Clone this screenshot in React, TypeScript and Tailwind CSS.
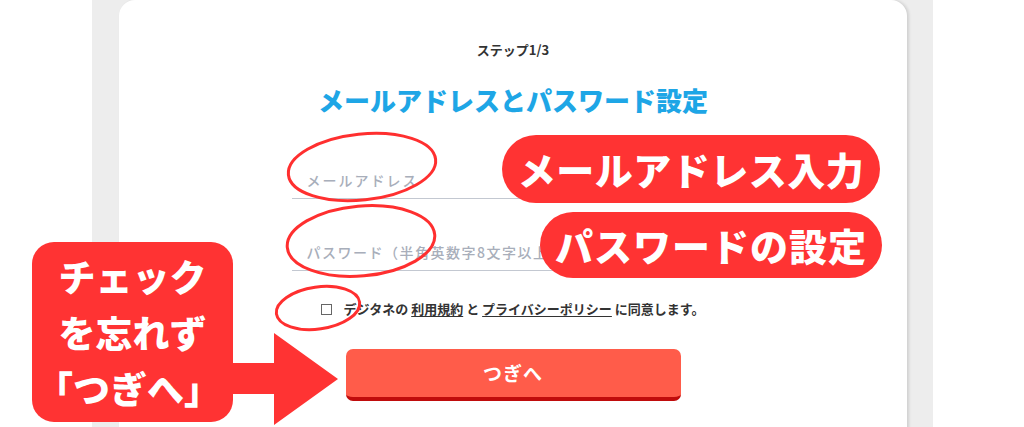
import React from "react";

const font = "font-['Noto_Sans_CJK_JP','Noto_Sans',sans-serif]";

const Overlay = () => (
  <>
    <svg
      className="absolute inset-0 pointer-events-none"
      width={1024}
      height={427}
      viewBox="0 0 1024 427"
    >
      <g fill="none" stroke="#ff2f2f" strokeWidth={3}>
        <ellipse cx={362} cy={167} rx={74} ry={33} transform="rotate(-6 362 167)" />
        <ellipse cx={361} cy={241} rx={74} ry={35} transform="rotate(-5 361 241)" />
        <ellipse cx={318} cy={308} rx={42} ry={21} transform="rotate(-8 318 308)" />
      </g>
      <polygon
        points="225,363 274,363 274,333 338,379 274,425 274,394 225,394"
        fill="#ff3333"
      />
    </svg>

    <div className="absolute left-[502px] top-[135px] w-[378px] h-[68px] rounded-full bg-[#ff3333] flex items-center justify-center">
      <span className="text-white text-[38px] font-black leading-none tracking-[0.5px]">
        メールアドレス入力
      </span>
    </div>
    <div className="absolute left-[540px] top-[212px] w-[342px] h-[66px] rounded-full bg-[#ff3333] flex items-center justify-center">
      <span className="text-white text-[38px] font-black leading-none tracking-[1px]">
        パスワードの設定
      </span>
    </div>

    <div className="absolute left-[32px] top-[242px] w-[201px] h-[180px] rounded-[22px] bg-[#ff3333] flex flex-col items-center justify-center text-white text-[37px] font-black leading-[56px]">
      <span>チェック</span>
      <span>を忘れず</span>
      <span className="-ml-[8px] whitespace-nowrap">
        <span className="inline-block -ml-[12px]">「</span>つぎへ<span className="inline-block -mr-[12px]">」</span>
      </span>
    </div>
  </>
);

const App = () => {
  return (
    <div className={`relative w-[1024px] h-[427px] overflow-hidden bg-white ${font}`}>
      <div className="flex h-full">
        <div className="w-[92px] shrink-0" />
        <div className="w-[841px] shrink-0 h-full bg-[#ededed] pl-[27px] pr-[26px]">
          <div className="h-[440px] bg-white rounded-t-[16px] shadow-[2px_0_3px_rgba(0,0,0,0.12)] flex flex-col items-center pt-[40px]">
            <p className="text-[13px] leading-[20px] font-bold text-[#333]">ステップ1/3</p>
            <h1 className="mt-[22px] text-[26px] leading-[36px] font-black text-[#1ea6e6]">
              メールアドレスとパスワード設定
            </h1>

            <input
              className="mt-[52px] w-[443px] pl-[15px] pb-[8px] text-[14px] leading-[20px] tracking-[2px] font-medium border-b border-[#c3c8d1] outline-none placeholder:text-[#a8aeba]"
              placeholder="メールアドレス"
            />
            <input
              className="mt-[43px] w-[443px] pl-[15px] pb-[8px] text-[14px] leading-[20px] tracking-[1.5px] font-medium border-b border-[#c3c8d1] outline-none placeholder:text-[#a8aeba]"
              placeholder="パスワード（半角英数字8文字以上）"
            />

            <div className="mt-[28px] flex items-center text-[13px] leading-[20px] font-bold text-[#333]">
              <span className="w-[11px] h-[11px] border border-[#666] mr-[11px]" />
              <span>
                デジタネの <span className="underline underline-offset-2">利用規約</span> と{" "}
                <span className="underline underline-offset-2">プライバシーポリシー</span> に同意します。
              </span>
            </div>

            <button className="mt-[30px] w-[335px] h-[52px] rounded-[7px] bg-[#ff5c4a] border-b-[4px] border-[#c00c0c] text-white text-[19px] font-bold tracking-[1px] flex items-center justify-center">
              つぎへ
            </button>
          </div>
        </div>
      </div>
      <Overlay />
    </div>
  );
};

export default App;
